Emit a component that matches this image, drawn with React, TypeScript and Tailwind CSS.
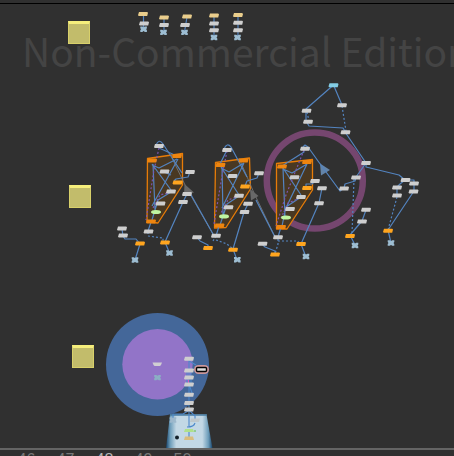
type Point = [number, number];
type Kind = "gray" | "orange" | "amber" | "tan" | "green" | "cyan";

const fills: Record<Kind, string> = {
  gray: "#cecece",
  orange: "#ee850f",
  amber: "#ffa51f",
  tan: "#e9cd8c",
  green: "#c0f5a0",
  cyan: "#83cce3",
};

const nodes: Record<Kind, Point[]> = {
  gray: [
    [144, 23.5], [164, 25], [185, 25], [214, 23.5], [214, 30.2], [238, 22.8], [238, 30.2],
    [159, 146], [164.5, 171.5], [190, 172], [171, 191.5], [160.5, 203.5], [148.5, 231.5],
    [187, 194], [183, 202], [122, 228.5], [123, 235.5],
    [227, 150], [232.5, 176], [259, 173.3], [239, 195.7], [228.5, 207.3], [248, 203.7],
    [244.5, 212], [216, 235.7], [197, 237.2],
    [305, 148.7], [294.5, 177.3], [315, 181], [301, 197], [290, 209], [322, 188.3],
    [319, 203.3], [278, 237.3], [262.5, 243.8],
    [306.5, 110.8], [308, 121.8], [342, 105.3], [345.5, 132.3], [366, 163], [356, 177.4],
    [344, 188.5], [405.5, 180], [414, 183.5], [397, 187.5], [397, 195.5], [413.5, 191.5],
    [366, 209.8], [362, 221.5],
    [189, 358.8], [189, 370.5], [189, 377.6], [189, 384.5], [189, 394.8], [189, 403], [189, 409.5],
  ],
  orange: [
    [152, 160.5], [177, 156], [151, 221.5],
    [220.5, 165], [243.5, 160.5], [219.5, 225.5],
    [282, 166.5], [307, 162], [281, 227],
  ],
  amber: [
    [177.5, 182.4], [140, 243.6], [165, 242.5], [245, 186.5], [208, 248], [233, 249.8],
    [307, 188], [275, 254.5], [301, 244], [350, 236], [388, 230.8],
  ],
  tan: [[143, 14], [164, 17.5], [187, 16.5], [214, 15.6], [238, 15.1]],
  green: [[156, 212], [224, 216.4], [286, 217.5]],
  cyan: [[333.5, 85.3]],
};

const nulls: Point[] = [
  [143.6, 29.2], [163.5, 32.4], [184.5, 32.4], [214, 37.5], [237.5, 37.5],
  [135, 260], [169.5, 253], [237.3, 259.7], [306, 256.5], [355, 245.5], [391, 243],
];

const regions = [
  "147.5,158.5 182.5,153.5 182.5,185 158,223 147,222",
  "215.5,162.5 249.5,158 250.5,189 226,227.5 214.5,228",
  "276.5,163.5 312.5,159.5 312.5,190 287,229 276.5,229",
];

const wires = [
  "M143.5 14V29", "M164 17V32", "M187 17L184.5 32", "M214 15V37", "M238 15V34L237.5 38",
  "M156 145Q159 138 163 144L182 173",
  "M159 148L177 156M152 164L171 190M153 164L155 210M178 159L152 206M177 159L159 168L152 165M164 172L171 175M171 192L158 200L152 220M151 222L148 231M190 172L188 177L176 179L174 181",
  "M187 194L183 202L165 242L169.5 253M122 229L123 236L125 239H136L140 244L135 260",
  "M224 149Q227 142 231 147L247 177",
  "M227 150L220 164M221 167L239 195M222 167L223 215M244 163L222 208M244 163L229 172L221 168M239 196L227 204L220 225M219 226L216 236M259 173L257 178L247 181L245 186M190 193L213 234",
  "M248 204L244 212L233 249L237 260M197 237L200 241L208 245V248",
  "M282 166L304 152L303 147L305 145L308 147L318 161L340 191L344 188L345 184L355 181L356 177L366 163L345 132",
  "M283 168L301 195M283 168L285 217M307 164L284 212M307 164L292 173L283 169M301 197L286 207L282 226M281 227L278 237M315 181L312 184H306V188M256 200L276 239",
  "M322 188L319 203L301 244L306 257M262 244L265 247L275 251V255",
  "M333.5 85L306 109V121L309 126L343 128L345.5 132M333.5 85L342 105",
  "M366 163L366 167L399 175L405 180L400 184L397 187V195M405 180H414V191L388 230L391 243M366 210L362 221L350 235L355 245",
];

const dashes = [
  "M148 232V236L163 238V242", "M216 236L213 241M216 240L227 244L233 249",
  "M278 239V244L275 254M278 241H297L301 244", "M307 112L309 121M342 106L346 131",
  "M354 179L352 234", "M397 197L388 230",
];

const purpleDashes = [
  "M159 148L154 170L146 220M171 192L160 195L153 208",
  "M227 151L222 176L214 224M239 196L228 200L221 213",
  "M304 150L286 195L276 226M300 198L288 203L281 218",
];

const frames = [
  { label: "46", color: "text-[#777777]" },
  { label: "47", color: "text-[#777777]" },
  { label: "48", color: "text-[#b5b5b5]" },
  { label: "49", color: "text-[#777777]" },
  { label: "50", color: "text-[#777777]" },
];

function Node({ at: [x, y], kind }: { at: Point; kind: Kind }) {
  if (kind === "green") {
    return <ellipse cx={x} cy={y} rx="5" ry="2.1" fill={fills.green} />;
  }
  return (
    <path
      d={`M${x - 4} ${y - 2}H${x + 4.2}L${x + 5} ${y - 1.2}L${x + 4.2} ${y + 2}H${x - 4.2}L${x - 5} ${y + 1.2}Z`}
      fill={fills[kind]}
    />
  );
}

function NullNode({ at: [x, y], color = "#9dbdd2" }: { at: Point; color?: string }) {
  return (
    <path
      d={`M${x - 3.3} ${y - 2.7}h2l1.3 .8l1.3-.8h2v1.8l-.8.9l.8.9v1.8h-2l-1.3-.8l-1.3 .8h-2v-1.8l.8-.9l-.8-.9Z`}
      fill={color}
    />
  );
}

function Sticky({ place }: { place: string }) {
  return (
    <div
      className={`absolute h-[23px] w-[22px] border border-t-[3px] border-[#d8d06a] border-t-[#f5ee7c] bg-[#c2bc6b] ${place}`}
    />
  );
}

function Network() {
  return (
    <svg
      className="absolute left-0 top-0"
      width="454"
      height="448"
      viewBox="0 4 454 448"
      role="img"
      aria-label="Node network"
    >
      <defs>
        <linearGradient id="glass">
          <stop offset="0" stopColor="#17436a" />
          <stop offset=".09" stopColor="#6d9dba" />
          <stop offset=".22" stopColor="#c3d8e5" />
          <stop offset=".78" stopColor="#c3d8e5" />
          <stop offset=".91" stopColor="#6d9dba" />
          <stop offset="1" stopColor="#17436a" />
        </linearGradient>
      </defs>

      <circle cx="314.8" cy="180.5" r="48" fill="none" stroke="#75466f" strokeWidth="6.5" />
      <circle cx="157.5" cy="364.5" r="51.5" fill="#446799" />
      <circle cx="157.5" cy="364.3" r="35.2" fill="#9274c8" />

      {regions.map((points) => (
        <polygon
          key={points}
          points={points}
          fill="#493822"
          stroke="#e77c08"
          strokeWidth="1.3"
          strokeLinejoin="round"
        />
      ))}

      <path
        d="M172 158L187 189L213 234M239 158L254 193L276 239"
        fill="none"
        stroke="#757575"
        strokeWidth=".9"
      />
      <path d="M184.500 184L194 192.500L184 195ZM250 189L258.500 196L251 200.500Z" fill="#686868" />
      <path d="M320 163.500L330 170L321 175.500Z" fill="#6484a8" />

      <g fill="none" stroke="#5384c0" strokeWidth="1.2" strokeLinejoin="round">
        {wires.map((d) => (
          <path key={d} d={d} />
        ))}
        {dashes.map((d) => (
          <path key={d} d={d} strokeDasharray="2 2" />
        ))}
      </g>
      <g fill="none" stroke="#7b55b0" strokeWidth="1.2" strokeDasharray="2 2">
        {purpleDashes.map((d) => (
          <path key={d} d={d} />
        ))}
      </g>

      <path d="M170 414.500H206.500L212.500 448H166Z" fill="url(#glass)" />
      <path d="M170 415H207" stroke="#477da2" strokeWidth="1.5" />
      <path
        d="M189 359V426M189 361L196 365M187 371V384M191 371V384M189 384L192 393M188 411L183 414H173V420M190 411L195 416V420M195 423Q194 427 187 427M189 430V438"
        fill="none"
        stroke="#4d88cb"
        strokeWidth="1.1"
      />
      <path d="M188.500 380V384" stroke="#db55bd" strokeWidth="1" />

      {(Object.keys(nodes) as Kind[]).map((kind) =>
        nodes[kind].map((at) => <Node key={at.join()} at={at} kind={kind} />),
      )}
      {nulls.map((at) => (
        <NullNode key={at.join()} at={at} />
      ))}

      <path d="M152.500 362.500H162L161 365L160 366H154.500L153.500 365Z" fill="#d0ced2" />
      <NullNode at={[157.5, 377.6]} color="#8baec4" />
      <rect x="194" y="365" width="15" height="9" rx="4.500" fill="#cc979b" />
      <rect x="196.500" y="367.500" width="10" height="4" rx="1" fill="#dedede" stroke="#050505" strokeWidth="1.4" />
      <NullNode at={[173, 420]} color="#9db8cc" />
      <path d="M191 418.500H200L199 422H190Z" fill="#bfc8cc" />
      <path d="M185 429H193L194 432H184Z" fill="#afe18b" />
      <path d="M185 436.500H193L194 440H184Z" fill="#d9bd7d" />
      <circle cx="195" cy="431" r=".8" fill="#53be29" />
      <circle cx="177" cy="437.500" r="2" fill="#13202a" />
    </svg>
  );
}

export default function App() {
  return (
    <div className="flex h-screen flex-col overflow-hidden bg-[#303030] font-['Noto_Sans_CJK_SC','Noto_Sans',sans-serif]">
      <div className="h-1 shrink-0 border-b border-black bg-[#303030]" />
      <main className="relative min-h-0 flex-1 overflow-hidden">
        <h1 className="absolute left-[22px] top-[21px] whitespace-nowrap text-[39px] leading-[50px] text-[#444444]">
          Non-Commercial Edition
        </h1>
        <Sticky place="left-[68px] top-[17px]" />
        <Sticky place="left-[69px] top-[181px]" />
        <Sticky place="left-[72px] top-[341px]" />
        <Network />
      </main>
      <footer className="h-2 shrink-0 overflow-hidden border-t-2 border-[#646464]">
        <ol className="ml-[7px] flex font-['Liberation_Sans',sans-serif] text-base leading-5">
          {frames.map(({ label, color }) => (
            <li key={label} className={`w-[39px] text-center ${color}`}>
              {label}
            </li>
          ))}
        </ol>
      </footer>
    </div>
  );
}
